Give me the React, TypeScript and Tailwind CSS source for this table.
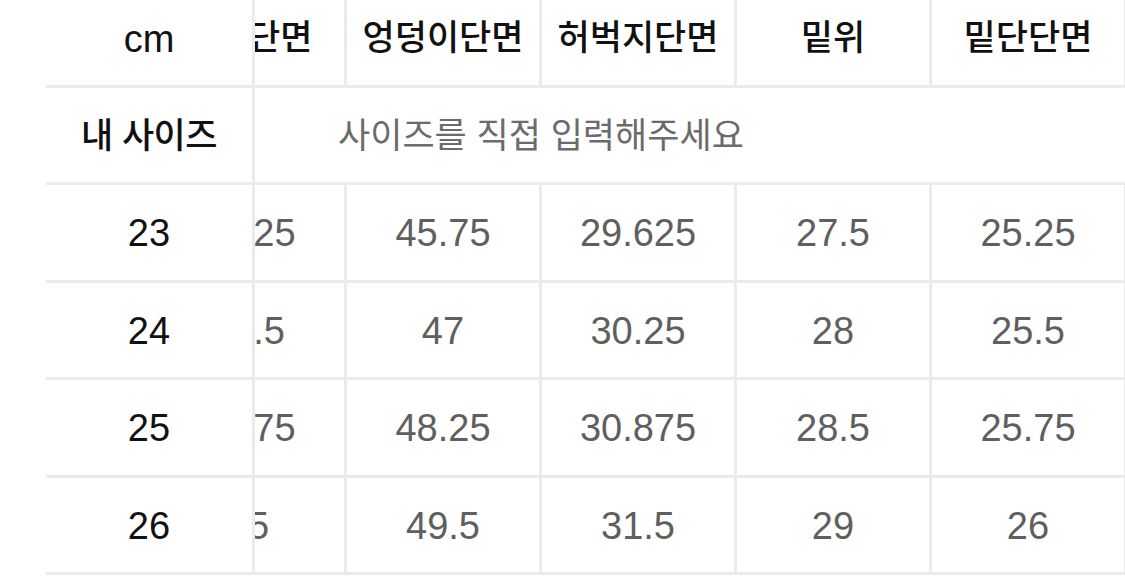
const columns = ['허리단면', '엉덩이단면', '허벅지단면', '밑위', '밑단단면'];

const sizes = [
  { label: '23', values: ['31.25', '45.75', '29.625', '27.5', '25.25'] },
  { label: '24', values: ['32.5', '47', '30.25', '28', '25.5'] },
  { label: '25', values: ['33.75', '48.25', '30.875', '28.5', '25.75'] },
  { label: '26', values: ['35', '49.5', '31.5', '29', '26'] },
];

const font = "font-['Liberation_Sans','Noto_Sans_CJK_KR',sans-serif]";

export default function App() {
  return (
    <div className={`w-[1125px] h-[576px] overflow-hidden bg-white ${font}`}>
      <div className="flex -mt-[10px]">
        {/* fixed first column */}
        <div className="ml-[46px] w-[209px] shrink-0 border-r-[3px] border-[#ebebeb] text-[#111]">
          <div className="h-[97.5px] flex items-center justify-center pt-[5px] border-b-[3px] border-[#ebebeb] text-[38px] font-medium">
            cm
          </div>
          <div className="h-[97.5px] flex items-center justify-center pt-[3px] border-b-[3px] border-[#ebebeb] text-[35px] font-medium tracking-[-0.5px]">
            내 사이즈
          </div>
          {sizes.map((s) => (
            <div
              key={s.label}
              className="h-[97.5px] flex items-center justify-center pt-[3px] border-b-[3px] border-[#ebebeb] text-[38px]"
            >
              {s.label}
            </div>
          ))}
        </div>

        {/* scrolled part */}
        <div className="flex-1 overflow-hidden">
          <div className="-ml-[103px] w-max">
            <div className="flex h-[97.5px] border-b-[3px] border-[#ebebeb]">
              {columns.map((c) => (
                <div
                  key={c}
                  className="w-[195px] shrink-0 flex items-center justify-center pt-[2px] border-r-[3px] border-[#ebebeb] text-[35px] font-medium text-[#111]"
                >
                  {c}
                </div>
              ))}
            </div>
            <div className="flex items-center h-[97.5px] pt-[3px] border-b-[3px] border-[#ebebeb]">
              <input
                readOnly
                placeholder="사이즈를 직접 입력해주세요"
                className="w-[975px] pl-[186px] bg-transparent outline-none text-[35px] placeholder:text-[#6b6b6b]"
              />
            </div>
            {sizes.map((s) => (
              <div key={s.label} className="flex h-[97.5px] border-b-[3px] border-[#ebebeb]">
                {s.values.map((v, i) => (
                  <div
                    key={i}
                    className="w-[195px] shrink-0 flex items-center justify-center pt-[3px] border-r-[3px] border-[#ebebeb] text-[38px] text-[#5f5f5f]"
                  >
                    {v}
                  </div>
                ))}
              </div>
            ))}
          </div>
        </div>
      </div>
    </div>
  );
}
